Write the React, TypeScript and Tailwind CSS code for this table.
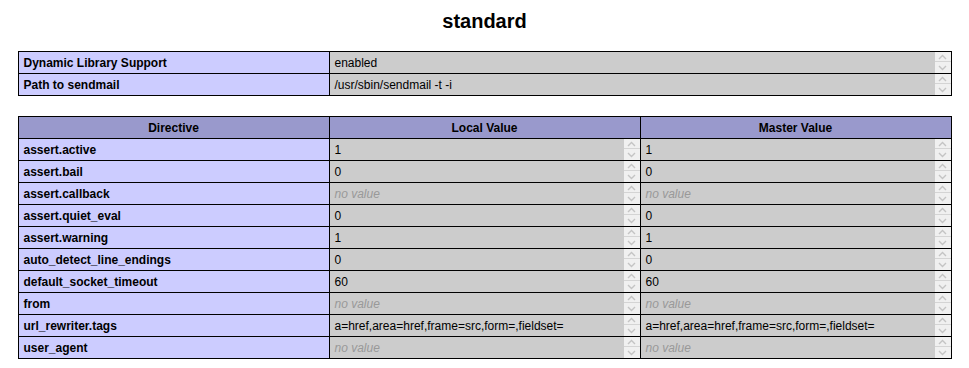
const FONT = { fontFamily: '"Liberation Sans", Arial, sans-serif' };

type Row = { name: string; local: string | null; master: string | null };

const directives: Row[] = [
  { name: "assert.active", local: "1", master: "1" },
  { name: "assert.bail", local: "0", master: "0" },
  { name: "assert.callback", local: null, master: null },
  { name: "assert.quiet_eval", local: "0", master: "0" },
  { name: "assert.warning", local: "1", master: "1" },
  { name: "auto_detect_line_endings", local: "0", master: "0" },
  { name: "default_socket_timeout", local: "60", master: "60" },
  { name: "from", local: null, master: null },
  {
    name: "url_rewriter.tags",
    local: "a=href,area=href,frame=src,form=,fieldset=",
    master: "a=href,area=href,frame=src,form=,fieldset=",
  },
  { name: "user_agent", local: null, master: null },
];

// disabled scroll buttons drawn on the right edge of every value cell
function Spinner() {
  return (
    <div className="flex w-[16px] shrink-0 flex-col bg-[#f0f0f0]">
      <div className="flex h-[10px] items-center justify-center border-b border-[#d4d4d4]">
        <svg width="9" height="6" viewBox="0 0 9 6">
          <path d="M1 5 L4.5 1.5 L8 5" fill="none" stroke="#c4c4c4" strokeWidth="1.4" />
        </svg>
      </div>
      <div className="flex flex-1 items-center justify-center">
        <svg width="9" height="6" viewBox="0 0 9 6">
          <path d="M1 1 L4.5 4.5 L8 1" fill="none" stroke="#c4c4c4" strokeWidth="1.4" />
        </svg>
      </div>
    </div>
  );
}

function Key({ children }: { children: React.ReactNode }) {
  return (
    <div className="flex h-[22px] items-center border-r border-b border-black bg-[#ccccff] pl-[5px] text-[12px] font-bold text-black">
      {children}
    </div>
  );
}

function Value({ value }: { value: string | null }) {
  return (
    <div className="flex h-[22px] border-r border-b border-black bg-[#cccccc]">
      <div className="flex flex-1 items-center pl-[5px] text-[12px] text-black">
        {value === null ? <i className="text-[#999999]">no value</i> : value}
      </div>
      <Spinner />
    </div>
  );
}

function Head({ children }: { children: React.ReactNode }) {
  return (
    <div className="flex h-[22px] items-center justify-center border-r border-b border-black bg-[#9999cc] text-[12px] font-bold text-black">
      {children}
    </div>
  );
}

export default function App() {
  return (
    <div className="min-h-[368px] w-full bg-white pt-[10px]" style={FONT}>
      <h2 className="mb-[18px] text-center text-[20px] leading-[23px] font-bold text-black">standard</h2>

      <div className="mx-auto grid w-[934px] grid-cols-[311px_1fr] border-t border-l border-black">
        <Key>Dynamic Library Support</Key>
        <Value value="enabled" />
        <Key>Path to sendmail</Key>
        <Value value="/usr/sbin/sendmail -t -i" />
      </div>

      <div className="mx-auto mt-[20px] grid w-[934px] grid-cols-[311px_311px_1fr] border-t border-l border-black">
        <Head>Directive</Head>
        <Head>Local Value</Head>
        <Head>Master Value</Head>
        {directives.map((d) => (
          <div key={d.name} className="contents">
            <Key>{d.name}</Key>
            <Value value={d.local} />
            <Value value={d.master} />
          </div>
        ))}
      </div>
    </div>
  );
}
